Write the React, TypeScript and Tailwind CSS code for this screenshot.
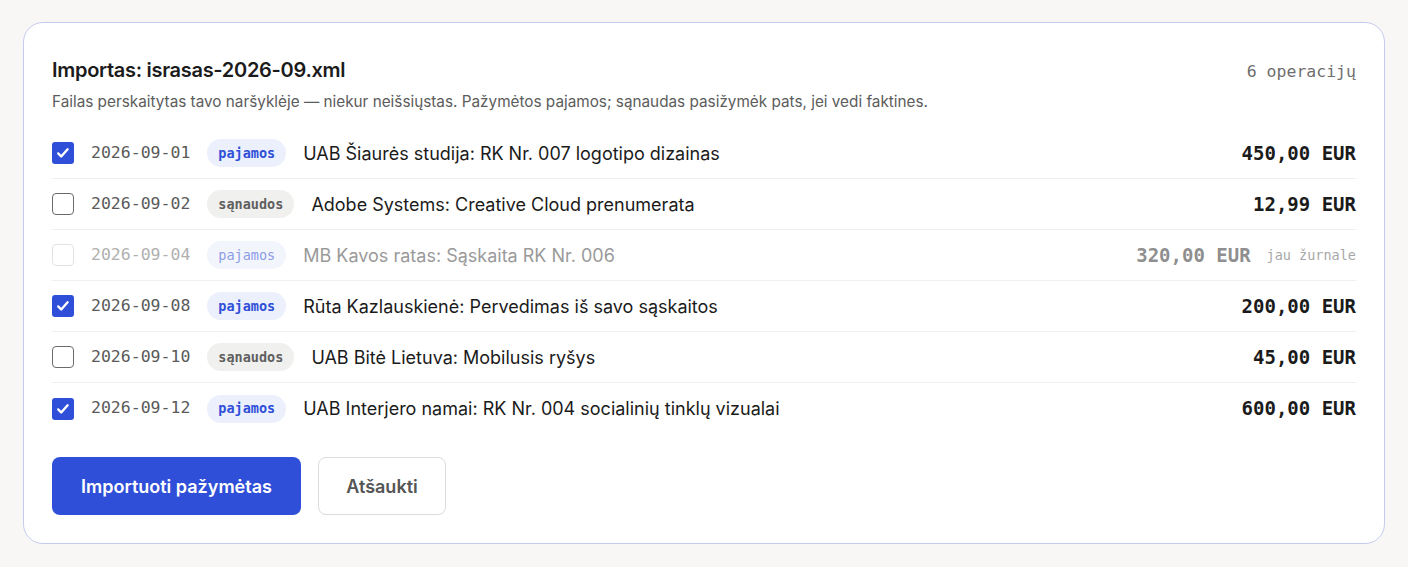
import React, { useState } from "react";

type Row = {
  date: string;
  kind: "pajamos" | "sąnaudos";
  text: string;
  amount: string;
  inJournal?: boolean;
};

const rows: Row[] = [
  { date: "2026-09-01", kind: "pajamos", text: "UAB Šiaurės studija: RK Nr. 007 logotipo dizainas", amount: "450,00 EUR" },
  { date: "2026-09-02", kind: "sąnaudos", text: "Adobe Systems: Creative Cloud prenumerata", amount: "12,99 EUR" },
  { date: "2026-09-04", kind: "pajamos", text: "MB Kavos ratas: Sąskaita RK Nr. 006", amount: "320,00 EUR", inJournal: true },
  { date: "2026-09-08", kind: "pajamos", text: "Rūta Kazlauskienė: Pervedimas iš savo sąskaitos", amount: "200,00 EUR" },
  { date: "2026-09-10", kind: "sąnaudos", text: "UAB Bitė Lietuva: Mobilusis ryšys", amount: "45,00 EUR" },
  { date: "2026-09-12", kind: "pajamos", text: "UAB Interjero namai: RK Nr. 004 socialinių tinklų vizualai", amount: "600,00 EUR" },
];

const sans = "font-['Inter','Noto_Sans',sans-serif]";
const mono = "font-['DejaVu_Sans_Mono','Liberation_Mono',monospace]";

const Check = ({ checked, disabled, onClick }: { checked: boolean; disabled?: boolean; onClick: () => void }) => {
  if (disabled) {
    return <div className="w-[22px] h-[22px] shrink-0 rounded-[4px] border border-[#e2e2e2] bg-white" />;
  }
  return (
    <button
      onClick={onClick}
      className={
        checked
          ? "w-[22px] h-[22px] shrink-0 rounded-[3px] bg-[#2f4fd8] flex items-center justify-center"
          : "w-[22px] h-[22px] shrink-0 rounded-[4px] border-[1.5px] border-[#6b6b6b] bg-white"
      }
    >
      {checked && (
        <svg width="16" height="16" viewBox="0 0 16 16" fill="none">
          <path d="M3.2 8.4l3 3.1 6.4-7.2" stroke="white" strokeWidth="2.4" strokeLinecap="round" strokeLinejoin="round" />
        </svg>
      )}
    </button>
  );
};

export default function App() {
  const [picked, setPicked] = useState<boolean[]>([true, false, false, true, false, true]);

  const toggle = (i: number) => setPicked((p) => p.map((v, j) => (j === i ? !v : v)));

  return (
    <div className={`min-h-screen bg-[#f8f7f5] pt-[22px] px-[23px] pb-[22px] ${sans}`}>
      <div className="bg-white border border-[#c5cbef] rounded-[20px] px-[28px] pt-[30px] pb-[28px]">
        {/* Header */}
        <div className="flex items-baseline justify-between">
          <h1 className="text-[20px] leading-[34px] font-semibold text-[#1b1b1b] tracking-[-0.3px]">Importas: israsas-2026-09.xml</h1>
          <span className={`${mono} text-[16.5px] text-[#6e6e6e]`}>6 operacijų</span>
        </div>
        <p className="mt-[5px] text-[15.3px] leading-[20px] text-[#5c5c5c]">
          Failas perskaitytas tavo naršyklėje — niekur neišsiųstas. Pažymėtos pajamos; sąnaudas pasižymėk pats, jei vedi faktines.
        </p>

        {/* Transactions */}
        <div className="mt-[16px]">
          {rows.map((r, i) => {
            const dim = r.inJournal;
            return (
              <div
                key={r.date}
                className={`flex items-center h-[51px] ${i < rows.length - 1 ? "border-b border-[#efefef]" : ""}`}
              >
                <Check checked={picked[i] && !dim} disabled={dim} onClick={() => toggle(i)} />
                <span className={`${mono} ml-[17px] text-[16.5px] ${dim ? "text-[#b0b0b0]" : "text-[#5a5a5a]"}`}>{r.date}</span>
                <span
                  className={`${mono} ml-[17px] h-[28px] px-[11px] rounded-full flex items-center text-[13.5px] ${
                    r.kind === "pajamos"
                      ? dim
                        ? "bg-[#f3f5fd] text-[#8c9ce6]"
                        : "bg-[#eceffc] text-[#2f4fd8] font-bold"
                      : "bg-[#f0f0ee] text-[#5f5f5f] font-bold"
                  }`}
                >
                  {r.kind}
                </span>
                <span className={`ml-[17px] text-[18px] ${dim ? "text-[#9a9a9a]" : "text-[#1b1b1b]"}`}>{r.text}</span>
                <span className="flex-1" />
                <span className={`${mono} text-[19px] font-bold ${dim ? "text-[#8f8f8f]" : "text-[#1b1b1b]"}`}>{r.amount}</span>
                {dim && <span className={`${mono} ml-[16px] text-[13.5px] text-[#a8a8a8]`}>jau žurnale</span>}
              </div>
            );
          })}
        </div>

        {/* Actions */}
        <div className="flex gap-[17px] mt-[23px]">
          <button className="h-[58px] w-[249px] rounded-[8px] bg-[#2f4fd8] text-white text-[18px] font-semibold">
            Importuoti pažymėtas
          </button>
          <button className="h-[58px] w-[128px] rounded-[8px] border border-[#dcdcdc] bg-white text-[#555] text-[18px] font-semibold">
            Atšaukti
          </button>
        </div>
      </div>
    </div>
  );
}
